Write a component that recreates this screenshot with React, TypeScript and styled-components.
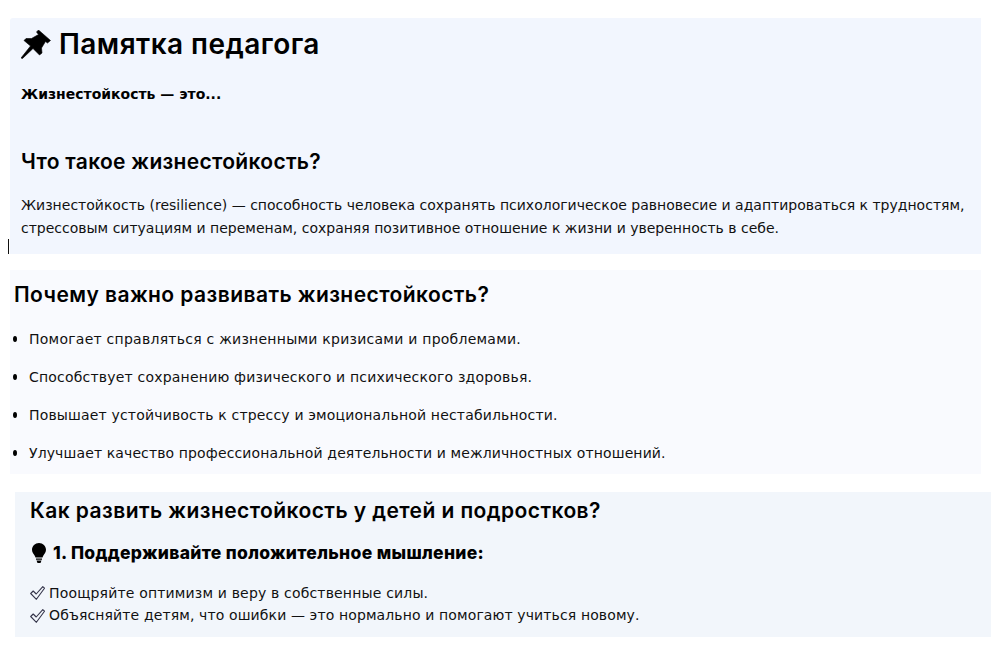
import styled, { createGlobalStyle } from "styled-components";

const Global = createGlobalStyle`
  html, body {
    margin: 0;
    padding: 0;
    background: #fff;
  }
  body {
    font-family: "DejaVu Sans", sans-serif;
    font-size: 14px;
    line-height: 22.4px;
    color: #111;
  }
`;

const Page = styled.div`
  width: 991px;
  height: 652px;
  overflow: hidden;
  padding-top: 18px;
  box-sizing: border-box;
`;

const Intro = styled.section`
  position: relative;
  box-sizing: border-box;
  width: 971px;
  height: 236px;
  margin-left: 10px;
  padding: 10px 11px;
  background: #f2f6fe;
  border-radius: 3px 0 0 0;

  &::after {
    content: "";
    position: absolute;
    left: -2px;
    bottom: 0;
    width: 1px;
    height: 15px;
    background: #111;
  }
`;

const Why = styled.section`
  box-sizing: border-box;
  width: 971px;
  height: 204px;
  margin: 16px 0 0 10px;
  padding: 10px 4px;
  background: #f9fafe;
`;

const How = styled.section`
  box-sizing: border-box;
  width: 976px;
  height: 145px;
  margin: 18px 0 0 15px;
  padding: 4px 15px;
  background: #f2f6fb;
`;

const Title = styled.h1`
  display: flex;
  align-items: center;
  gap: 8px;
  margin: 0;
  height: 33px;
  font-family: "Inter", sans-serif;
  font-size: 28px;
  font-weight: 600;
  letter-spacing: 0.45px;
  line-height: 33px;
  color: #000;
`;

const Heading = styled.h2`
  margin: 0;
  font-family: "Inter", sans-serif;
  font-size: 21px;
  font-weight: 600;
  letter-spacing: 0.43px;
  line-height: 30px;
  color: #000;
`;

const IntroHeading = styled(Heading)`
  margin-top: 42px;
  letter-spacing: 0.3px;
`;

const Lead = styled.p`
  margin: 22px 0 0;
  font-weight: 700;
  color: #000;
`;

const Body = styled.p`
  margin: 17px 0 0;
`;

const List = styled.ul`
  display: flex;
  flex-direction: column;
  gap: 15.6px;
  margin: 18px 0 0;
  padding: 0;
  list-style: none;
`;

const Item = styled.li<{ $spacing: number }>`
  position: relative;
  padding-left: 15px;
  letter-spacing: ${(p) => p.$spacing}px;

  &::before {
    content: "";
    position: absolute;
    left: -1px;
    top: 8px;
    width: 4px;
    height: 6px;
    border-radius: 50%;
    background: #000;
  }
`;

const SubHeading = styled.h3`
  display: flex;
  align-items: center;
  gap: 7px;
  margin: 15px 0 0;
  font-family: "Inter", sans-serif;
  font-size: 17.5px;
  font-weight: 800;
  letter-spacing: 0.31px;
  line-height: 24px;
  color: #000;
`;

const Checks = styled.div`
  margin-top: 17px;
`;

const CheckRow = styled.div<{ $spacing: number }>`
  display: flex;
  align-items: center;
  gap: 4px;
  letter-spacing: ${(p) => p.$spacing}px;
`;

const PinSvg = styled.svg`
  width: 30px;
  height: 29px;
  flex: none;
`;

const BulbSvg = styled.svg`
  width: 14px;
  height: 20px;
  flex: none;
  margin-left: 2px;
`;

const CheckSvg = styled.svg`
  width: 15px;
  height: 14px;
  flex: none;
`;

function Pin() {
  return (
    <PinSvg viewBox="0 0 30 29">
      <path
        d="M17.500 0 29.500 10.500 26.500 13 24.500 11.500 20.500 18 21 23 18.500 25 12 18.500 1.500 28.500 0 28 9.500 16 3 10.500 5 8.500 10.500 8.500 17.500 4.500 15.500 2Z"
        fill="#000"
        stroke="#000"
        strokeWidth="0.6"
        strokeLinejoin="round"
      />
    </PinSvg>
  );
}

function Bulb() {
  return (
    <BulbSvg viewBox="0 0 14 20">
      <path d="M7 0C3.100 0 0 3 0 6.800c0 2.600 1.600 4 2.600 5.600.5.800.8 1.500.9 2.100h7c.1-.6.4-1.300.9-2.100C12.400 10.800 14 9.400 14 6.800 14 3 10.900 0 7 0Z" fill="#000" />
      <path d="M4 15.500h6v1.300H4ZM4.500 17.600h5L8.500 20h-3Z" fill="#000" />
    </BulbSvg>
  );
}

function Check() {
  return (
    <CheckSvg viewBox="0 0 15 14">
      <path
        d="M0.700 7.500 3.200 5 6.200 8 12.800 0.700 14.500 2.200 6.400 13.300Z"
        fill="none"
        stroke="#35354a"
        strokeWidth="1.100"
        strokeLinejoin="round"
      />
    </CheckSvg>
  );
}

const why = [
  { text: "Помогает справляться с жизненными кризисами и проблемами.", spacing: 0.25 },
  { text: "Способствует сохранению физического и психического здоровья.", spacing: 0.2 },
  { text: "Повышает устойчивость к стрессу и эмоциональной нестабильности.", spacing: 0.17 },
  { text: "Улучшает качество профессиональной деятельности и межличностных отношений.", spacing: 0.12 },
];

export default function App() {
  return (
    <Page>
      <Global />
      <Intro>
        <Title>
          <Pin />
          Памятка педагога
        </Title>
        <Lead>Жизнестойкость — это...</Lead>
        <IntroHeading>Что такое жизнестойкость?</IntroHeading>
        <Body>
          Жизнестойкость (resilience) — способность человека сохранять психологическое равновесие и адаптироваться к трудностям, стрессовым ситуациям и переменам, сохраняя позитивное отношение к жизни и уверенность в себе.
        </Body>
      </Intro>
      <Why>
        <Heading>Почему важно развивать жизнестойкость?</Heading>
        <List>
          {why.map((item) => (
            <Item key={item.text} $spacing={item.spacing}>
              {item.text}
            </Item>
          ))}
        </List>
      </Why>
      <How>
        <Heading>Как развить жизнестойкость у детей и подростков?</Heading>
        <SubHeading>
          <Bulb />
          1. Поддерживайте положительное мышление:
        </SubHeading>
        <Checks>
          <CheckRow $spacing={0.17}>
            <Check />
            Поощряйте оптимизм и веру в собственные силы.
          </CheckRow>
          <CheckRow $spacing={0.12}>
            <Check />
            Объясняйте детям, что ошибки — это нормально и помогают учиться новому.
          </CheckRow>
        </Checks>
      </How>
    </Page>
  );
}
